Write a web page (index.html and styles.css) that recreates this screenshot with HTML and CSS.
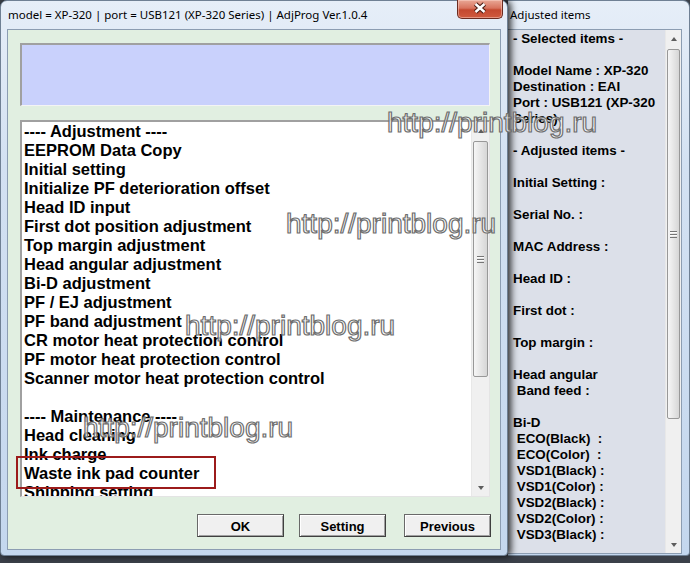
FILE: index.html
```html
<!DOCTYPE html>
<html lang="en">
  <head>
    <meta charset="UTF-8" />
    <title>AdjProg</title>
    <link rel="stylesheet" href="styles.css">
  </head>
  <body>
    <div class="desk">
      <!-- main dialog -->
      <div class="win main-win">
        <div class="titlebar">
          <span class="title">model = XP-320 | port = USB121 (XP-320 Series) | AdjProg Ver.1.0.4</span>
          <div class="close-btn">
            <svg width="46" height="19" viewBox="0 0 46 19">
              <path d="M18.5 5 L27.5 13 M27.5 5 L18.5 13" stroke="#4a1c14" stroke-width="4.6" fill="none" />
              <path d="M18.5 5 L27.5 13 M27.5 5 L18.5 13" stroke="#ffffff" stroke-width="2.4" fill="none" />
            </svg>
          </div>
        </div>
        <div class="client">
          <div class="msg-box"></div>
          <div class="listbox">
            <ul class="items">
              <li>---- Adjustment ----</li>
              <li>EEPROM Data Copy</li>
              <li>Initial setting</li>
              <li>Initialize PF deterioration offset</li>
              <li>Head ID input</li>
              <li>First dot position adjustment</li>
              <li>Top margin adjustment</li>
              <li>Head angular adjustment</li>
              <li>Bi-D adjustment</li>
              <li>PF / EJ adjustment</li>
              <li>PF band adjustment</li>
              <li>CR motor heat protection control</li>
              <li>PF motor heat protection control</li>
              <li>Scanner motor heat protection control</li>
              <li>&nbsp;</li>
              <li>---- Maintenance ----</li>
              <li>Head cleaning</li>
              <li>Ink charge</li>
              <li>Waste ink pad counter</li>
              <li>Shipping setting</li>
            </ul>
            <div class="vscroll">
              <div class="sb-btn"><span class="arrow-up"></span></div>
              <div class="sb-track">
                <div class="thumb list-thumb"><div class="grip"></div></div>
              </div>
              <div class="sb-btn"><span class="arrow-down"></span></div>
            </div>
          </div>
          <div class="buttons">
            <button class="btn btn-ok">OK</button>
            <button class="btn btn-setting">Setting</button>
            <button class="btn">Previous</button>
          </div>
        </div>
      </div>

      <!-- adjusted items window behind -->
      <div class="win side-win">
        <div class="titlebar">
          <span class="title side-title">Adjusted items</span>
        </div>
        <div class="side-client">
          <div class="side-text">- Selected items -

Model Name : XP-320
Destination : EAI
Port : USB121 (XP-320
Series)

- Adjusted items -

Initial Setting :

Serial No. :

MAC Address :

Head ID :

First dot :

Top margin :

Head angular
 Band feed :

Bi-D
 ECO(Black)  :
 ECO(Color)  :
 VSD1(Black) :
 VSD1(Color) :
 VSD2(Black) :
 VSD2(Color) :
 VSD3(Black) :</div>
          <div class="vscroll side-scroll">
            <div class="sb-btn"><span class="arrow-up"></span></div>
            <div class="sb-track">
              <div class="thumb side-thumb"><div class="grip"></div></div>
            </div>
            <div class="sb-btn"><span class="arrow-down"></span></div>
          </div>
        </div>
      </div>

      <!-- annotation + watermarks on top -->
      <div class="red-mark"></div>
      <div class="mark mark-1">http://printblog.ru</div>
      <div class="mark mark-2">http://printblog.ru</div>
      <div class="mark mark-3">http://printblog.ru</div>
      <div class="mark mark-4">http://printblog.ru</div>
    </div>
  </body>
</html>
```

FILE: styles.css
```css
body {
  margin: 0;
  background: #3b4049;
  font-family: "Liberation Sans", Arial, sans-serif;
}

.desk {
  position: relative;
  display: flex;
  height: 563px;
  overflow: hidden;
}

/* window frames */
.win {
  box-sizing: border-box;
  height: 556px;
  display: flex;
  flex-direction: column;
  background: linear-gradient(#e6eef8, #d3e1f2 30%, #c4d7ee);
  border: 1px solid #6f8094;
  border-radius: 7px 7px 4px 4px;
}

.main-win {
  position: relative;
  z-index: 2;
  flex: none;
  width: 508px;
  box-shadow: 3px 0 7px rgba(0, 0, 0, 0.8);
}

.side-win {
  flex: 1;
  border-left: none;
  border-radius: 0 7px 4px 0;
}

.titlebar {
  display: flex;
  align-items: flex-start;
  height: 28px;
  flex: none;
}

.title {
  padding: 5px 0 0 7px;
  line-height: 18px;
  font-family: "Noto Sans", "Open Sans", sans-serif;
  font-size: 11.5px;
  color: #000;
  white-space: nowrap;
}

.side-title {
  padding-left: 2px;
}

.close-btn {
  margin: -1px 4px 0 auto;
  width: 46px;
  height: 19px;
  box-sizing: border-box;
  border: 1px solid #6b2b20;
  border-top: none;
  border-radius: 0 0 5px 5px;
  background: linear-gradient(#e9a896, #d8735e 45%, #c4482f 55%, #cf5a3e);
  box-shadow: inset 0 0 0 1px rgba(255, 220, 210, 0.45);
}

.close-btn svg {
  display: block;
  margin: -1px 0 0 -1px;
}

/* dialog body */
.client {
  box-sizing: border-box;
  height: 521px;
  margin: 0 6px;
  padding: 13px 10px 0 12px;
  background: #e1efe1;
  border: 1px solid #8c9db2;
}

.msg-box {
  box-sizing: border-box;
  width: 470px;
  height: 63px;
  background: #c9d1fc;
  border-top: 2px solid #a0a0a0;
  border-left: 2px solid #a0a0a0;
  border-right: 1px solid #f4f4f4;
  border-bottom: 1px solid #f4f4f4;
}

.listbox {
  box-sizing: border-box;
  display: flex;
  width: 470px;
  height: 377px;
  margin-top: 14px;
  background: #fff;
  border-top: 2px solid #a0a0a0;
  border-left: 2px solid #a0a0a0;
  border-right: 1px solid #e4e4e4;
  border-bottom: 1px solid #e4e4e4;
  overflow: hidden;
}

.items {
  flex: 1;
  margin: 0;
  padding: 0 0 0 2px;
  list-style: none;
  font-size: 16.5px;
  font-weight: bold;
  line-height: 19px;
  color: #000;
  white-space: nowrap;
}

/* win7 style scrollbar */
.vscroll {
  flex: none;
  width: 17px;
  display: flex;
  flex-direction: column;
  background: #f0f0f0;
  border-left: 1px solid #e8e8e8;
}

.sb-btn {
  height: 17px;
  flex: none;
  display: flex;
  align-items: center;
  justify-content: center;
}

.arrow-up,
.arrow-down {
  width: 0;
  height: 0;
  border-left: 3.5px solid transparent;
  border-right: 3.5px solid transparent;
}

.arrow-up {
  border-bottom: 4px solid #5d5d5d;
}

.arrow-down {
  border-top: 4px solid #5d5d5d;
}

.sb-track {
  flex: 1;
}

.thumb {
  box-sizing: border-box;
  margin: 2px 1px 0;
  border: 1px solid #989898;
  border-radius: 2px;
  background: linear-gradient(to right, #f6f6f6, #e6e6e6 50%, #d6d6d6);
  display: flex;
  align-items: center;
  justify-content: center;
}

.list-thumb {
  height: 236px;
}

.grip {
  width: 7px;
  height: 7px;
  background: repeating-linear-gradient(#757575 0 1px, #fcfcfc 1px 2px, transparent 2px 3px);
}

.buttons {
  display: flex;
  justify-content: flex-end;
  margin-top: 17px;
  margin-right: -1px;
}

.btn {
  box-sizing: border-box;
  width: 87px;
  height: 23px;
  padding: 1px 0 0;
  font-family: "Liberation Sans", Arial, sans-serif;
  font-size: 13px;
  font-weight: bold;
  color: #000;
  background: #f0f0f0;
  border: 1px solid #696969;
  border-bottom-color: #3f3f3f;
  border-right-color: #3f3f3f;
  box-shadow: inset 1px 1px 0 #fff, inset -1px -1px 0 #a0a0a0;
}

.btn-ok {
  margin-right: 15px;
}

.btn-setting {
  margin-right: 18px;
}

/* right window */
.side-client {
  box-sizing: border-box;
  display: flex;
  height: 525px;
  margin-right: 7px;
  background: #dce0e9;
  border-top: 1px solid #8c9db2;
  border-right: 1px solid #8c9db2;
  border-bottom: 1px solid #8c9db2;
}

.side-text {
  flex: 1;
  padding: 1px 0 0 5px;
  font-size: 13.4px;
  font-weight: bold;
  line-height: 16px;
  color: #000;
  white-space: pre;
  overflow: hidden;
}

.side-scroll {
  width: 15px;
}

.side-thumb {
  height: 370px;
}

/* annotation + watermarks */
.red-mark {
  position: absolute;
  left: 16px;
  top: 456px;
  width: 200px;
  height: 33px;
  box-sizing: border-box;
  border: 2px solid #9c1b1b;
  z-index: 4;
}

.mark {
  position: absolute;
  z-index: 5;
  font-family: "Liberation Sans", Arial, sans-serif;
  font-size: 28px;
  line-height: 28px;
  color: rgba(255, 255, 255, 0.75);
  -webkit-text-stroke: 1.2px #6e6e6e;
  white-space: nowrap;
}

.mark-1 { left: 387px; top: 109px; }
.mark-2 { left: 286px; top: 210px; }
.mark-3 { left: 185px; top: 312px; }
.mark-4 { left: 83px; top: 414px; }
```
